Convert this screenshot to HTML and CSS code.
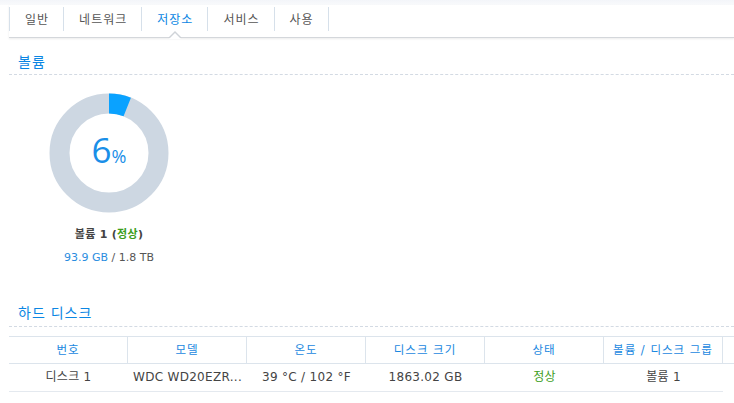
FILE: index.html
```html
<!DOCTYPE html>
<html lang="ko">
<head>
    <meta charset="UTF-8">
    <title>저장소</title>
    <link rel="stylesheet" href="styles.css">
</head>
<body>
    <div class="topbar"></div>
    <div class="tabs">
        <div class="tab">일반</div>
        <div class="tab">네트워크</div>
        <div class="tab active">저장소</div>
        <div class="tab">서비스</div>
        <div class="tab">사용</div>
    </div>

    <!-- Volume -->
    <h2 class="section-title first">볼륨</h2>
    <div class="volume">
        <div class="donut">
            <svg width="120" height="120" viewBox="0 0 120 120">
                <circle cx="60" cy="60" r="49.5" fill="none" stroke="#cdd7e2" stroke-width="20"/>
                <circle cx="60" cy="60" r="49.5" fill="none" stroke="#0aa2ff" stroke-width="20"
                        stroke-dasharray="18.66 311.02" transform="rotate(-90 60 60)"/>
            </svg>
            <div class="donut-label"><span class="num">6</span><span class="pct">%</span></div>
        </div>
        <div class="vol-name">볼륨 1 (<span class="ok">정상</span>)</div>
        <div class="vol-size"><span class="used">93.9 GB</span> / 1.8 TB</div>
    </div>

    <!-- Hard disks -->
    <h2 class="section-title">하드 디스크</h2>
    <div class="disk-table">
        <div class="row head">
            <div class="cell">번호</div>
            <div class="cell">모델</div>
            <div class="cell">온도</div>
            <div class="cell">디스크 크기</div>
            <div class="cell">상태</div>
            <div class="cell">볼륨 / 디스크 그룹</div>
        </div>
        <div class="row data">
            <div class="cell">디스크 1</div>
            <div class="cell">WDC WD20EZR...</div>
            <div class="cell">39 °C / 102 °F</div>
            <div class="cell">1863.02 GB</div>
            <div class="cell ok">정상</div>
            <div class="cell">볼륨 1</div>
        </div>
    </div>
</body>
</html>
```

FILE: styles.css
```css
body {
    margin: 0;
    background: #fff;
    font-family: "DejaVu Sans", "Noto Sans CJK KR", sans-serif;
    font-size: 11px;
    color: #444;
}
.topbar {
    height: 5px;
    background: linear-gradient(#f3f5f9, #f9fafc);
}
.tabs {
    position: relative;
    display: flex;
    margin-left: 9px;
    height: 32px;
    border-bottom: 1px solid #d4d7db;
    box-shadow: 0 1px 2px rgba(0, 0, 0, 0.08);
}
.tab {
    margin-top: 2px;
    height: 24px;
    line-height: 24px;
    padding: 0 14px 0 15px;
    border-left: 1px solid #d6e0ea;
    font-family: "Noto Sans CJK KR", sans-serif;
    font-size: 12px;
    letter-spacing: 1px;
    color: #555;
    position: relative;
}
.tab:last-child {
    border-right: 1px solid #d6e0ea;
}
.tab.active {
    color: #0b86e3;
}
.tab.active::before,
.tab.active::after {
    content: "";
    position: absolute;
    left: 50%;
    width: 0;
    height: 0;
    border-style: solid;
}
.tab.active::before {
    bottom: -7px;
    margin-left: -7px;
    border-width: 0 7px 7px 7px;
    border-color: transparent transparent #cfd3d8 transparent;
}
.tab.active::after {
    bottom: -8px;
    margin-left: -6px;
    border-width: 0 6px 6px 6px;
    border-color: transparent transparent #fff transparent;
}
.section-title {
    margin: 35px 0 0 9px;
    padding: 0 0 4px 9px;
    border-bottom: 1px dashed #d3dae3;
    font-family: "Noto Sans CJK KR", sans-serif;
    font-size: 14px;
    letter-spacing: 1px;
    line-height: 20px;
    font-weight: normal;
    color: #0b86e3;
}
.section-title.first {
    margin-top: 13px;
    padding-bottom: 3px;
}
.volume {
    width: 200px;
    margin: 18px 0 0 9px;
    text-align: center;
}
.donut {
    position: relative;
    width: 120px;
    height: 120px;
    margin: 0 auto;
}
.donut svg {
    display: block;
}
.donut-label {
    position: absolute;
    left: 0;
    right: 0;
    top: 37px;
    color: #1a8fe8;
    font-family: "Open Sans", sans-serif;
}
.donut-label .num {
    font-size: 35px;
    line-height: 40px;
}
.donut-label .pct {
    font-size: 18px;
}
.vol-name {
    margin-top: 13px;
    line-height: 18px;
    font-weight: bold;
    color: #444;
    letter-spacing: 0.3px;
}
.vol-size {
    margin-top: 5px;
    line-height: 18px;
    color: #555;
}
.used {
    color: #2a8de0;
}
.ok {
    color: #3d9e1c;
}
.disk-table {
    margin: 9px 0 0 9px;
}
.row {
    display: flex;
}
.row.head {
    border-top: 1px solid #dce4ec;
    border-bottom: 1px solid #dce4ec;
}
.row.data {
    width: 714px;
    border-bottom: 1px solid #e4e9ef;
}
.cell {
    width: 119px;
    text-align: center;
    white-space: nowrap;
    overflow: hidden;
}
.head .cell {
    height: 26px;
    line-height: 26px;
    box-sizing: border-box;
    border-right: 1px solid #dce4ec;
    color: #1a88e0;
    font-size: 11.5px;
    letter-spacing: 1px;
}
.data .cell {
    height: 27px;
    line-height: 27px;
    font-size: 12px;
    letter-spacing: 0.3px;
    color: #444;
}
.data .cell.ok {
    color: #3d9e1c;
}
```
